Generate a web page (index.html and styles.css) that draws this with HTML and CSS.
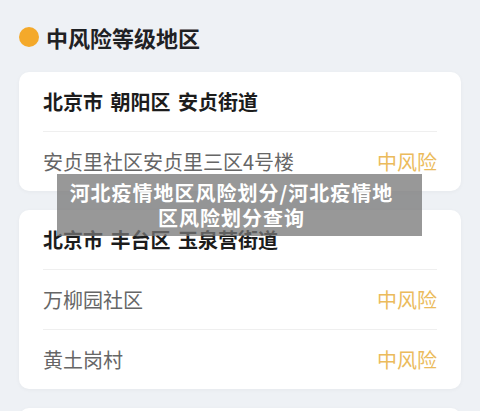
FILE: index.html
```html
<!DOCTYPE html>
<html lang="zh">
<head>
<meta charset="utf-8">
<link rel="stylesheet" href="styles.css">
</head>
<body>
<div class="page">
  <div class="section-title"><span class="dot"></span><span>中风险等级地区</span></div>
  <div class="card">
    <div class="card-head">北京市 朝阳区 安贞街道</div>
    <div class="row"><span class="name">安贞里社区安贞里三区4号楼</span><span class="risk">中风险</span></div>
  </div>
  <div class="card">
    <div class="card-head">北京市 丰台区 玉泉营街道</div>
    <div class="row"><span class="name">万柳园社区</span><span class="risk">中风险</span></div>
    <div class="row"><span class="name">黄土岗村</span><span class="risk">中风险</span></div>
  </div>
  <div class="card card-next"></div>
  <div class="overlay">河北疫情地区风险划分/河北疫情地<br>区风险划分查询</div>
</div>
</body>
</html>
```
FILE: styles.css
```css
html, body {
  margin: 0;
  padding: 0;
  background: #eef1f5;
  height: 100%;
  overflow: hidden;
}
body {
  font-family: "Noto Sans CJK SC", "Noto Sans", sans-serif;
}
.page {
  position: relative;
  padding: 22px 19px 0;
  display: flex;
  flex-direction: column;
  gap: 19px;
}
.section-title {
  display: flex;
  align-items: center;
  gap: 7px;
  height: 30px;
  font-size: 22px;
  font-weight: 700;
  color: #1f2124;
  margin-bottom: 1px;
}
.dot {
  width: 20px;
  height: 20px;
  border-radius: 50%;
  background: #f4a92a;
  flex: none;
}
.card {
  background: #ffffff;
  border-radius: 10px;
  padding: 0 24px;
  box-shadow: 0 1px 4px rgba(0, 0, 0, 0.04);
}
.card-next {
  height: 60px;
}
.card-head {
  height: 59px;
  display: flex;
  align-items: center;
  font-size: 20px;
  font-weight: 700;
  color: #1c1c1c;
  word-spacing: 3px;
}
.row {
  height: 60px;
  border-top: 1px solid #efefef;
  box-sizing: border-box;
  display: flex;
  align-items: center;
  justify-content: space-between;
  font-size: 20px;
}
.name {
  color: #666666;
}
.risk {
  color: #ebbb5c;
}
.overlay {
  position: absolute;
  left: 57px;
  top: 174px;
  width: 365px;
  height: 62px;
  box-sizing: border-box;
  padding: 6px 16px 0 0;
  background: rgba(118, 118, 118, 0.75);
  color: #ffffff;
  font-size: 20px;
  font-weight: 700;
  line-height: 25px;
  letter-spacing: 1px;
  text-align: center;
}
```
